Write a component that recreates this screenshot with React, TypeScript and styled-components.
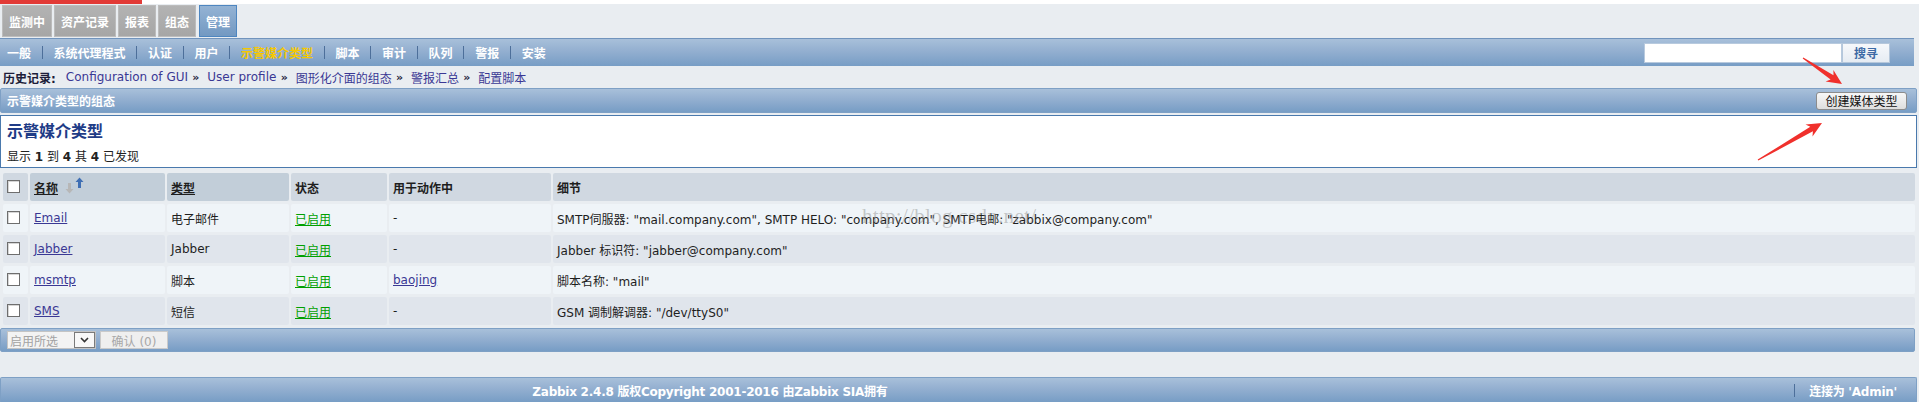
import React from 'react';
import styled, { createGlobalStyle, css } from 'styled-components';

const GlobalStyle = createGlobalStyle`
  html, body { margin: 0; padding: 0; }
  body {
    background: #e9edf1;
    font-family: "DejaVu Sans", "Noto Sans CJK SC", sans-serif;
    font-size: 12px;
    color: #1e1e1e;
    overflow: hidden;
  }
`;

const Page = styled.div`
  position: relative;
  width: 1919px;
  height: 402px;
  overflow: hidden;
`;

const TopStrip = styled.div`
  height: 4px;
  background: #ffffff;
  display: flex;
`;

const RedMark = styled.div`
  width: 142px;
  background: #e23a36;
`;

const TabRow = styled.div`
  display: flex;
  gap: 2px;
  height: 34px;
  box-sizing: border-box;
  padding: 1px 0 0 2px;
`;

const Tab = styled.div<{ $active?: boolean }>`
  height: 32px;
  box-sizing: border-box;
  padding: 0 6px;
  display: flex;
  align-items: center;
  font-weight: bold;
  color: #ffffff;
  background: linear-gradient(#b3b3b3, #a6a6a6);
  border: 1px solid #bcbcbc;
  ${(p) =>
    p.$active &&
    css`
      margin-left: 1px;
      background: linear-gradient(#94b3d4, #7399c2);
      border-color: #4e86c0;
    `}
`;

const barGradient = css`
  background: linear-gradient(#a8c0da 0%, #93afd0 45%, #779dc5 100%);
`;

const NavBar = styled.div`
  ${barGradient};
  height: 28px;
  width: 1914px;
  box-sizing: border-box;
  border-top: 1px solid #7194bd;
  display: flex;
  align-items: center;
  padding-left: 7px;
`;

const NavLink = styled.span<{ $current?: boolean }>`
  font-weight: bold;
  color: ${(p) => (p.$current ? '#f6c800' : '#ffffff')};
  white-space: nowrap;
`;

const NavSep = styled.span`
  width: 1px;
  height: 13px;
  margin: 0 11px 0 10.5px;
  background: #4d6f9a;
`;

const SearchForm = styled.div`
  margin-left: auto;
  margin-right: 24px;
  display: flex;
  align-items: center;
`;

const SearchInput = styled.div`
  width: 198px;
  height: 20px;
  box-sizing: border-box;
  background: #ffffff;
  border: 1px solid #b8cade;
`;

const SearchButton = styled.div`
  width: 48px;
  height: 20px;
  box-sizing: border-box;
  background: linear-gradient(#f6f8fb, #e6ecf3);
  border: 1px solid #b5c7db;
  color: #3d6aa5;
  font-weight: bold;
  display: flex;
  align-items: center;
  justify-content: center;
`;

const History = styled.div`
  height: 22px;
  display: flex;
  align-items: center;
  padding-left: 3px;
  white-space: pre;
`;

const HistoryLabel = styled.span`
  font-weight: bold;
  color: #1d1d3a;
  margin-right: 10px;
`;

const Link = styled.span`
  color: #3a3894;
`;

const Arrow = styled.span`
  color: #1d1d3a;
  font-size: 11px;
  font-weight: bold;
  margin: 0 4px 0 0.5px;
`;

const TitleBar = styled.div`
  ${barGradient};
  height: 25px;
  box-sizing: border-box;
  margin-right: 2px;
  border: 1px solid #7ea0c5;
  border-radius: 2px;
  display: flex;
  align-items: center;
  padding: 0 9px 0 6px;
`;

const TitleText = styled.span`
  color: #ffffff;
  font-weight: bold;
`;

const GrayButton = styled.div`
  margin-left: auto;
  height: 18px;
  width: 91px;
  box-sizing: border-box;
  border: 1px solid #8c8c8c;
  border-radius: 3px;
  background: linear-gradient(#f7f7f7, #dedede);
  color: #111;
  display: flex;
  align-items: center;
  justify-content: center;
`;

const Box = styled.div`
  margin: 2px 2px 0 0;
  height: 53px;
  box-sizing: border-box;
  background: #ffffff;
  border: 1px solid #4a79ad;
  padding: 5px 6px 0;
`;

const BoxTitle = styled.div`
  font-size: 16px;
  font-weight: bold;
  color: #1f3c87;
  line-height: 22px;
`;

const BoxCount = styled.div`
  margin-top: 6px;
  line-height: 16px;
  color: #222;
  b {
    font-weight: bold;
  }
`;

const Grid = styled.div`
  display: grid;
  grid-template-columns: 25px 135px 122px 96px 162px 1fr;
  column-gap: 2px;
  row-gap: 3px;
  margin: 5px 4px 0 3px;
`;

type Tone = 'head' | 'sort' | 'odd' | 'even';

const toneBg: Record<Tone, string> = {
  head: '#d0d8e1',
  sort: '#c2ced9',
  odd: '#eff4f8',
  even: '#e0e5ec',
};

const Cell = styled.div<{ $tone: Tone }>`
  height: 28px;
  box-sizing: border-box;
  padding: 0 4px;
  display: flex;
  align-items: center;
  border-radius: 2px;
  background: ${(p) => toneBg[p.$tone]};
  white-space: nowrap;
  color: #1e1e1e;
  font-weight: ${(p) => (p.$tone === 'head' || p.$tone === 'sort' ? 'bold' : 'normal')};
`;

const SortLabel = styled.span`
  text-decoration: underline;
`;

const Check = styled.span`
  width: 13px;
  height: 13px;
  box-sizing: border-box;
  border: 1px solid #6e6e6e;
  background: #ffffff;
  box-shadow: inset 1px 1px 0 #d6d6d6;
  margin-top: -2px;
`;

const RowLink = styled.span`
  color: #3a3894;
  text-decoration: underline;
`;

const StatusLink = styled.span`
  color: #00a000;
  text-decoration: underline;
`;

const SortIcon = styled.svg`
  margin-left: 7px;
  margin-top: -4px;
`;

const BottomBar = styled.div`
  ${barGradient};
  margin: 3px 4px 0 0;
  height: 24px;
  box-sizing: border-box;
  border: 1px solid #7ea0c5;
  border-radius: 2px;
  display: flex;
  align-items: center;
  gap: 4px;
  padding-left: 6px;
`;

const FakeSelect = styled.div`
  width: 89px;
  height: 18px;
  box-sizing: border-box;
  background: #f3f3f3;
  border: 1px solid #c4c4c4;
  display: flex;
  align-items: center;
  color: #a2a2a2;
  padding-left: 2px;
`;

const SelectArrow = styled.span`
  margin-left: auto;
  width: 21px;
  height: 16px;
  box-sizing: border-box;
  border: 1px solid #7a7a7a;
  background: #f8f8f8;
  display: flex;
  align-items: center;
  justify-content: center;
`;

const DisabledButton = styled.div`
  width: 68px;
  height: 18px;
  box-sizing: border-box;
  background: #efefef;
  border: 1px solid #cacaca;
  color: #a8a8a8;
  display: flex;
  align-items: center;
  justify-content: center;
`;

const Footer = styled.div`
  ${barGradient};
  margin: 25px 2px 0 0;
  height: 25px;
  box-sizing: border-box;
  border: 1px solid #7ea0c5;
  border-bottom: none;
  border-radius: 2px 2px 0 0;
  display: flex;
  align-items: center;
  color: #ffffff;
  font-weight: bold;
  letter-spacing: -0.25px;
`;

const FooterCopy = styled.div`
  width: 1418px;
  flex-shrink: 0;
  text-align: center;
`;

const FooterRight = styled.div`
  margin-left: auto;
  display: flex;
  align-items: center;
  padding-right: 19px;
`;

const FooterSep = styled.span`
  width: 1px;
  height: 13px;
  background: #4d6f9a;
  margin-right: 14px;
`;

const Overlay = styled.svg`
  position: absolute;
  left: 0;
  top: 0;
  pointer-events: none;
`;

const Watermark = styled.div`
  position: absolute;
  left: 862px;
  top: 204px;
  font-family: "Liberation Serif", serif;
  font-size: 21px;
  color: rgba(140, 140, 140, 0.45);
  pointer-events: none;
  letter-spacing: 0.3px;
`;

function arrowPoints(x1: number, y1: number, x2: number, y2: number) {
  const dx = x2 - x1;
  const dy = y2 - y1;
  const len = Math.hypot(dx, dy);
  const ux = dx / len;
  const uy = dy / len;
  const nx = -uy;
  const ny = ux;
  const H = 15;
  const W = 7;
  const bx = x2 - ux * H;
  const by = y2 - uy * H;
  const pts: [number, number][] = [
    [x1 + nx * 0.6, y1 + ny * 0.6],
    [bx + ux * 3 + nx * 2.6, by + uy * 3 + ny * 2.6],
    [bx + nx * W, by + ny * W],
    [x2, y2],
    [bx - nx * W, by - ny * W],
    [bx + ux * 3 - nx * 2.6, by + uy * 3 - ny * 2.6],
    [x1 - nx * 0.6, y1 - ny * 0.6],
  ];
  return pts.map((p) => p.map((v) => v.toFixed(1)).join(',')).join(' ');
}

const navItems = ['一般', '系统代理程式', '认证', '用户', '示警媒介类型', '脚本', '审计', '队列', '警报', '安装'];

const rows = [
  {
    name: 'Email',
    type: '电子邮件',
    action: '',
    details: 'SMTP伺服器: "mail.company.com", SMTP HELO: "company.com", SMTP电邮: "zabbix@company.com"',
  },
  { name: 'Jabber', type: 'Jabber', action: '', details: 'Jabber 标识符: "jabber@company.com"' },
  { name: 'msmtp', type: '脚本', action: 'baojing', details: '脚本名称: "mail"' },
  { name: 'SMS', type: '短信', action: '', details: 'GSM 调制解调器: "/dev/ttyS0"' },
];

export default function App() {
  return (
    <Page>
      <GlobalStyle />
      <TopStrip>
        <RedMark />
      </TopStrip>
      <TabRow>
        <Tab>监测中</Tab>
        <Tab>资产记录</Tab>
        <Tab>报表</Tab>
        <Tab>组态</Tab>
        <Tab $active>管理</Tab>
      </TabRow>
      <NavBar>
        {navItems.map((item, i) => (
          <React.Fragment key={item}>
            {i > 0 && <NavSep />}
            <NavLink $current={item === '示警媒介类型'}>{item}</NavLink>
          </React.Fragment>
        ))}
        <SearchForm>
          <SearchInput />
          <SearchButton>搜寻</SearchButton>
        </SearchForm>
      </NavBar>
      <History>
        <HistoryLabel>历史记录:</HistoryLabel>
        <Link>Configuration of GUI</Link>
        <Arrow> » </Arrow>
        <Link>User profile</Link>
        <Arrow> » </Arrow>
        <Link>图形化介面的组态</Link>
        <Arrow> » </Arrow>
        <Link>警报汇总</Link>
        <Arrow> » </Arrow>
        <Link>配置脚本</Link>
      </History>
      <TitleBar>
        <TitleText>示警媒介类型的组态</TitleText>
        <GrayButton>创建媒体类型</GrayButton>
      </TitleBar>
      <Box>
        <BoxTitle>示警媒介类型</BoxTitle>
        <BoxCount>
          显示 <b>1</b> 到 <b>4</b> 其 <b>4</b> 已发现
        </BoxCount>
      </Box>
      <Grid>
        <Cell $tone="head">
          <Check />
        </Cell>
        <Cell $tone="sort">
          <SortLabel>名称</SortLabel>
          <SortIcon width="20" height="17" viewBox="0 0 20 17">
            <path d="M3 6h3v6h2.5L4.5 16.5 0.5 12H3z" fill="#b7b7b7" />
            <path d="M13 11h3V5h2.5L14.5 0.5 10.5 5H13z" fill="#3f6fb4" />
          </SortIcon>
        </Cell>
        <Cell $tone="sort">
          <SortLabel>类型</SortLabel>
        </Cell>
        <Cell $tone="head">状态</Cell>
        <Cell $tone="head">用于动作中</Cell>
        <Cell $tone="head">细节</Cell>
        {rows.map((r, i) => {
          const tone: Tone = i % 2 === 0 ? 'odd' : 'even';
          return (
            <React.Fragment key={r.name}>
              <Cell $tone={tone}>
                <Check />
              </Cell>
              <Cell $tone={tone}>
                <RowLink>{r.name}</RowLink>
              </Cell>
              <Cell $tone={tone}>{r.type}</Cell>
              <Cell $tone={tone}>
                <StatusLink>已启用</StatusLink>
              </Cell>
              <Cell $tone={tone}>{r.action ? <RowLink>{r.action}</RowLink> : '-'}</Cell>
              <Cell $tone={tone}>{r.details}</Cell>
            </React.Fragment>
          );
        })}
      </Grid>
      <BottomBar>
        <FakeSelect>
          启用所选
          <SelectArrow>
            <svg width="9" height="6" viewBox="0 0 9 6">
              <path d="M1 1l3.5 3.5L8 1" stroke="#333" strokeWidth="1.6" fill="none" />
            </svg>
          </SelectArrow>
        </FakeSelect>
        <DisabledButton>确认 (0)</DisabledButton>
      </BottomBar>
      <Footer>
        <FooterCopy>Zabbix 2.4.8 版权Copyright 2001-2016 由Zabbix SIA拥有</FooterCopy>
        <FooterRight>
          <FooterSep />
          连接为 'Admin'
        </FooterRight>
      </Footer>
      <Watermark>http://blog.csdn.net/</Watermark>
      <Overlay width="1919" height="402" viewBox="0 0 1919 402">
        <polygon points={arrowPoints(1803, 58, 1842, 84)} fill="#f0302c" />
        <polygon points={arrowPoints(1758, 160, 1822, 123)} fill="#f0302c" />
      </Overlay>
    </Page>
  );
}
